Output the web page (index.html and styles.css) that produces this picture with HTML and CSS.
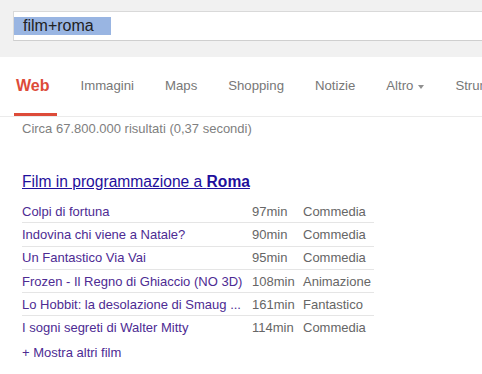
FILE: index.html
```html
<!doctype html>
<html>
<head>
<meta charset="utf-8">
<title>film+roma - Cerca con Google</title>
<link rel="stylesheet" href="styles.css">
</head>
<body>
<div id="header">
	<div class="searchbox"><span class="query">film+roma</span></div>
</div>

<div id="tabs">
	<a class="tab active">Web</a>
	<a class="tab">Immagini</a>
	<a class="tab">Maps</a>
	<a class="tab">Shopping</a>
	<a class="tab">Notizie</a>
	<a class="tab">Altro<span class="arrow"></span></a>
	<a class="tab">Strumenti di ricerca</a>
</div>

<div id="results">
	<div class="stats">Circa 67.800.000 risultati (0,37 secondi)</div>
	<h3 class="heading"><a>Film in programmazione a <b>Roma</b></a></h3>
	<table class="films">
		<tr><td class="name"><a>Colpi di fortuna</a></td><td class="len">97min</td><td>Commedia</td></tr>
		<tr><td class="name"><a>Indovina chi viene a Natale?</a></td><td class="len">90min</td><td>Commedia</td></tr>
		<tr><td class="name"><a>Un Fantastico Via Vai</a></td><td class="len">95min</td><td>Commedia</td></tr>
		<tr><td class="name"><a>Frozen - Il Regno di Ghiaccio (NO 3D)</a></td><td class="len">108min</td><td>Animazione</td></tr>
		<tr><td class="name"><a>Lo Hobbit: la desolazione di Smaug ...</a></td><td class="len">161min</td><td>Fantastico</td></tr>
		<tr><td class="name"><a>I sogni segreti di Walter Mitty</a></td><td class="len">114min</td><td>Commedia</td></tr>
	</table>
	<a class="more">+ Mostra altri film</a>
</div>
</body>
</html>
```

FILE: styles.css
```css
body {
	margin: 0;
	width: 482px;
	overflow: hidden;
	font-family: "Liberation Sans", Arial, sans-serif;
	background: #fff;
}
#header {
	height: 46px;
	padding: 11px 0 0 13px;
	background: #f1f1f1;
}
.searchbox {
	box-sizing: border-box;
	height: 30px;
	padding-top: 5px;
	background: #fff;
	border: 1px solid #d9d9d9;
	border-right: none;
	border-bottom-color: #cfcfcf;
}
.query {
	display: inline-block;
	height: 18px;
	line-height: 18px;
	padding: 0 17px 0 9px;
	font-size: 16px;
	color: #222;
	background: #99b5e2;
}
#tabs {
	display: flex;
	height: 59px;
	padding-left: 14px;
	border-bottom: 1px solid #ebebeb;
	white-space: nowrap;
	overflow: hidden;
}
.tab {
	padding-top: 21px;
	margin-right: 31px;
	line-height: 16px;
	font-size: 13.2px;
	color: #777;
}
.tab.active {
	box-sizing: border-box;
	height: 59px;
	padding: 21px 8px 0 2px;
	margin-right: 23px;
	font-size: 16px;
	font-weight: bold;
	color: #dd4b39;
	border-bottom: 3px solid #dd4b39;
}
.arrow {
	display: inline-block;
	margin-left: 5px;
	vertical-align: middle;
	border-top: 4px solid #909090;
	border-left: 3.5px solid transparent;
	border-right: 3.5px solid transparent;
}
#results {
	padding: 4px 0 0 22px;
}
.stats {
	line-height: 16px;
	font-size: 13px;
	color: #808080;
}
.heading {
	margin: 35px 0 8px;
	line-height: 20px;
	font-size: 15.6px;
	font-weight: normal;
}
.heading a {
	color: #1f0f9c;
	text-decoration: underline;
}
.films {
	width: 352px;
	border-collapse: collapse;
	font-size: 13px;
	color: #666;
}
.films td {
	height: 22.3px;
	padding: 0;
	border-bottom: 1px solid #e5e5e5;
	white-space: nowrap;
}
.films tr:last-child td {
	border-bottom: none;
}
.films td.name {
	width: 230px;
}
.films td.len {
	width: 51px;
}
.films a, .more {
	color: #4d2b93;
}
.more {
	display: block;
	margin-top: 6px;
	line-height: 16px;
	font-size: 13px;
}
```
